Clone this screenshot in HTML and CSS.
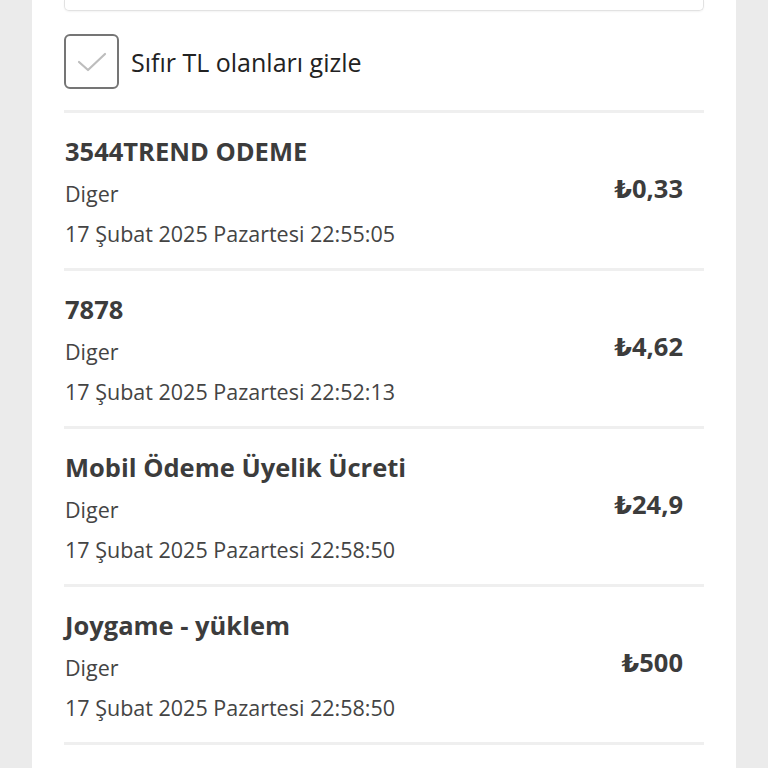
FILE: index.html
```html
<!DOCTYPE html>
<html lang="tr">
<head>
<meta charset="utf-8">
<link rel="stylesheet" href="styles.css">
</head>
<body>
<div class="panel">
  <div class="search"></div>
  <label class="check-row">
    <span class="checkbox">
      <svg width="30" height="22" viewBox="0 0 30 22"><path d="M2 11 L11 19 L28 3" fill="none" stroke="#bdbdbd" stroke-width="2.2" stroke-linecap="round" stroke-linejoin="round"/></svg>
    </span>
    <span class="check-label">Sıfır TL olanları gizle</span>
  </label>
  <div class="list">
    <div class="item">
      <div class="info">
        <div class="title">3544TREND ODEME</div>
        <div class="sub">Diger</div>
        <div class="sub">17 Şubat 2025 Pazartesi 22:55:05</div>
      </div>
      <div class="amount">₺0,33</div>
    </div>
    <div class="item">
      <div class="info">
        <div class="title">7878</div>
        <div class="sub">Diger</div>
        <div class="sub">17 Şubat 2025 Pazartesi 22:52:13</div>
      </div>
      <div class="amount">₺4,62</div>
    </div>
    <div class="item">
      <div class="info">
        <div class="title">Mobil Ödeme Üyelik Ücreti</div>
        <div class="sub">Diger</div>
        <div class="sub">17 Şubat 2025 Pazartesi 22:58:50</div>
      </div>
      <div class="amount">₺24,9</div>
    </div>
    <div class="item">
      <div class="info">
        <div class="title">Joygame - yüklem</div>
        <div class="sub">Diger</div>
        <div class="sub">17 Şubat 2025 Pazartesi 22:58:50</div>
      </div>
      <div class="amount">₺500</div>
    </div>
  </div>
</div>
</body>
</html>
```
FILE: styles.css
```css
html, body {
  margin: 0;
  padding: 0;
  background: #ebebeb;
  font-family: "Open Sans", "DejaVu Sans", sans-serif;
  color: #333;
}
.panel {
  margin: 0 32px;
  background: #fff;
  padding: 0 32px;
  min-height: 768px;
  box-sizing: border-box;
}
.search {
  height: 10px;
  border: 1px solid #e2e2e2;
  border-top: none;
  border-radius: 0 0 5px 5px;
  box-shadow: 0 1px 2px rgba(0,0,0,0.05);
}
.check-row {
  display: flex;
  align-items: center;
  gap: 12px;
  margin-top: 23px;
  padding-bottom: 21px;
  border-bottom: 3px solid #efefef;
}
.checkbox {
  width: 51px;
  height: 51px;
  border: 2px solid #757575;
  border-radius: 6px;
  display: flex;
  align-items: center;
  justify-content: center;
}
.check-label {
  font-size: 25px;
  color: #222;
}
.item {
  display: flex;
  align-items: center;
  justify-content: space-between;
  padding: 20px 21px 14px 1px;
  border-bottom: 3px solid #efefef;
}
.title {
  font-size: 25.5px;
  font-weight: 700;
  line-height: 36px;
  color: #3c3c3c;
  margin-bottom: 5px;
}
.sub {
  font-size: 21.5px;
  line-height: 40px;
  color: #444;
}
.amount {
  font-size: 25.5px;
  font-weight: 700;
  color: #3c3c3c;
  margin-bottom: 12px;
}
```
